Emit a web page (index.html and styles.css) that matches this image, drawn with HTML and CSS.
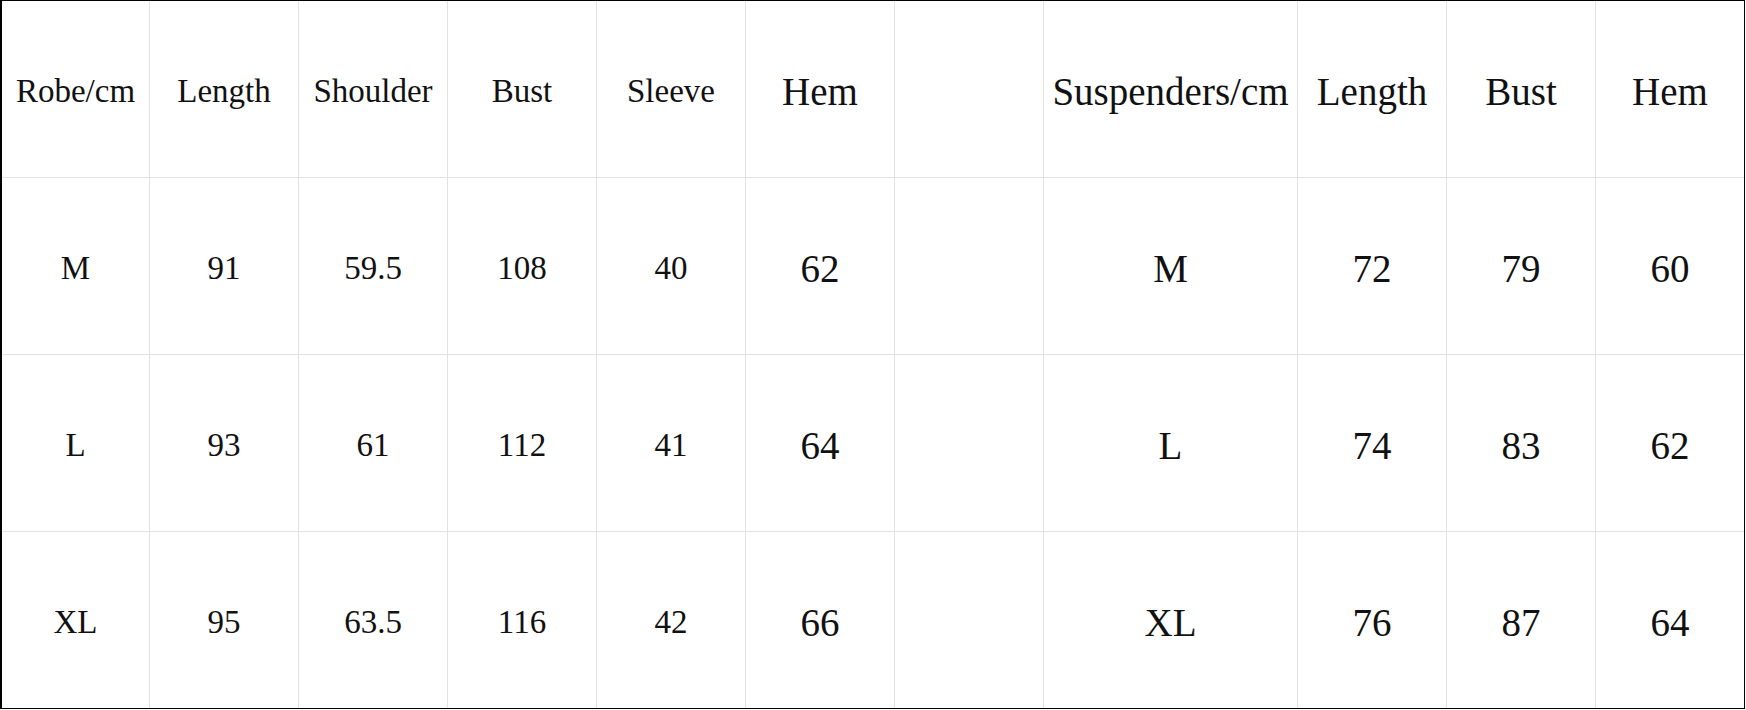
FILE: index.html
```html
<!DOCTYPE html>
<html>
<head>
<meta charset="utf-8">
<link rel="stylesheet" href="styles.css">
</head>
<body>
<div class="sheet">
  <div class="cell sm">Robe/cm</div>
  <div class="cell sm">Length</div>
  <div class="cell sm">Shoulder</div>
  <div class="cell sm">Bust</div>
  <div class="cell sm">Sleeve</div>
  <div class="cell lg">Hem</div>
  <div class="cell"></div>
  <div class="cell lg">Suspenders/cm</div>
  <div class="cell lg">Length</div>
  <div class="cell lg">Bust</div>
  <div class="cell lg">Hem</div>

  <div class="cell sm">M</div>
  <div class="cell sm">91</div>
  <div class="cell sm">59.5</div>
  <div class="cell sm">108</div>
  <div class="cell sm">40</div>
  <div class="cell lg">62</div>
  <div class="cell"></div>
  <div class="cell lg">M</div>
  <div class="cell lg">72</div>
  <div class="cell lg">79</div>
  <div class="cell lg">60</div>

  <div class="cell sm">L</div>
  <div class="cell sm">93</div>
  <div class="cell sm">61</div>
  <div class="cell sm">112</div>
  <div class="cell sm">41</div>
  <div class="cell lg">64</div>
  <div class="cell"></div>
  <div class="cell lg">L</div>
  <div class="cell lg">74</div>
  <div class="cell lg">83</div>
  <div class="cell lg">62</div>

  <div class="cell sm">XL</div>
  <div class="cell sm">95</div>
  <div class="cell sm">63.5</div>
  <div class="cell sm">116</div>
  <div class="cell sm">42</div>
  <div class="cell lg">66</div>
  <div class="cell"></div>
  <div class="cell lg">XL</div>
  <div class="cell lg">76</div>
  <div class="cell lg">87</div>
  <div class="cell lg">64</div>
</div>
</body>
</html>
```

FILE: styles.css
```css
html, body {
  margin: 0;
  padding: 0;
  background: #ffffff;
}

.sheet {
  box-sizing: content-box;
  display: grid;
  grid-template-columns: 147px repeat(6, 148px) 253px repeat(3, 148px);
  grid-template-rows: repeat(4, 176px);
  gap: 1px;
  background: #e2e2e2;
  border-top: 1px solid #000;
  border-right: 1px solid #000;
  border-bottom: 1px solid #000;
  border-left: 2px solid #000;
  width: 1742px;
}

.cell {
  background: #ffffff;
  display: flex;
  align-items: center;
  justify-content: center;
  padding-top: 4px;
  box-sizing: border-box;
  font-family: "Liberation Serif", "Times New Roman", serif;
  color: #111;
  white-space: nowrap;
}

.sm {
  font-size: 33px;
}

.lg {
  font-size: 39px;
}
```
